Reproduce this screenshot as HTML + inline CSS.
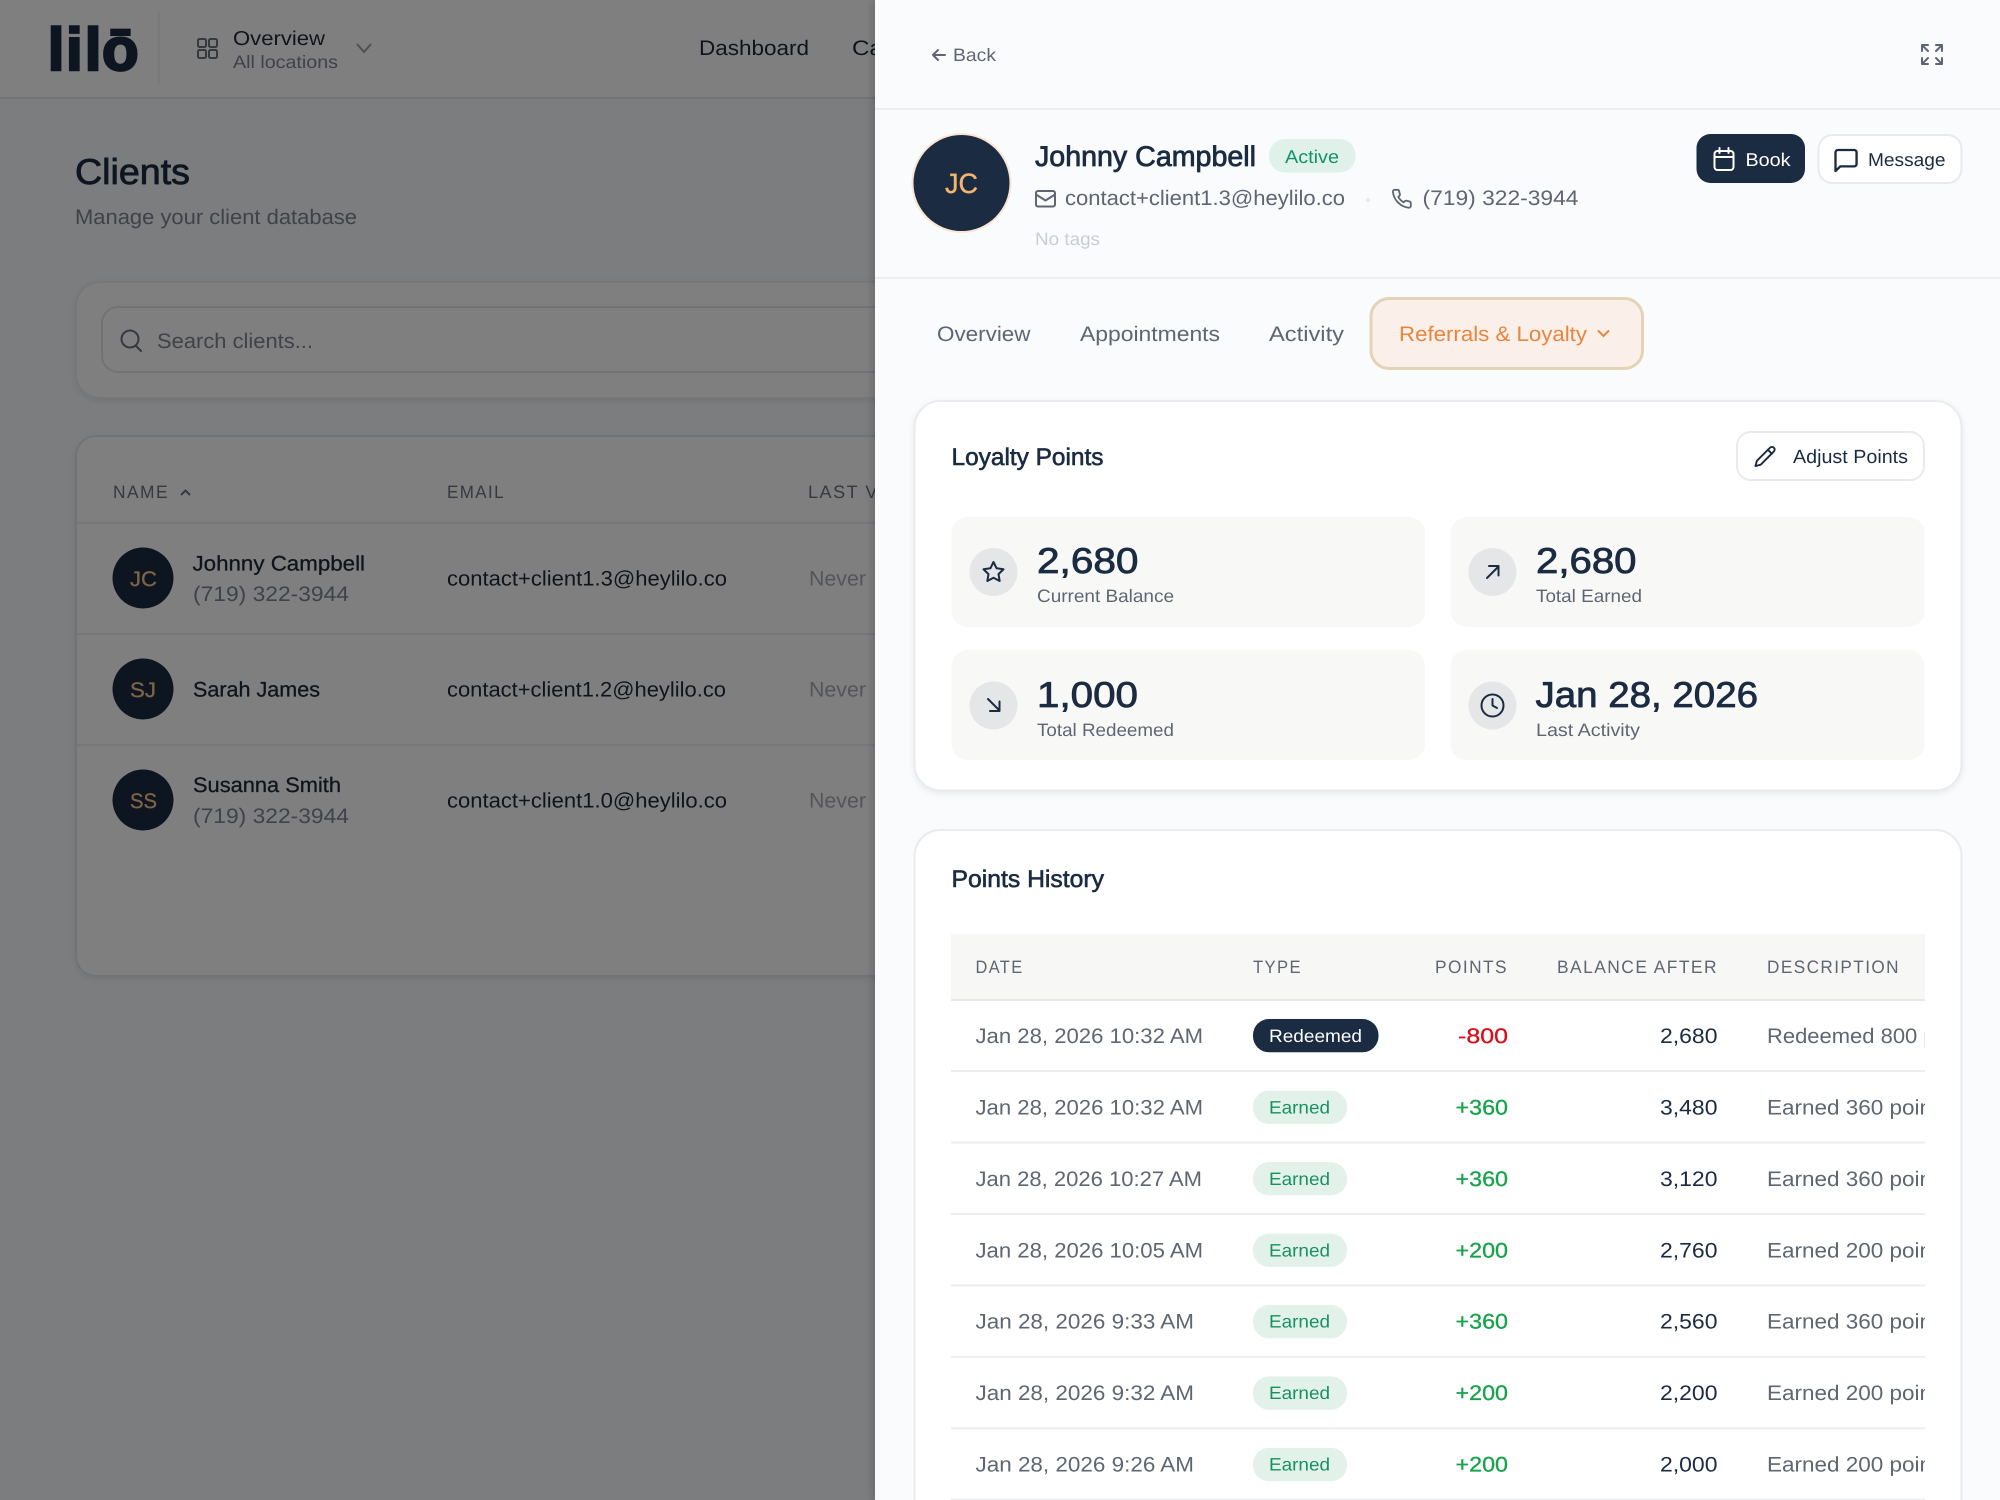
<!DOCTYPE html>
<html><head><meta charset="utf-8"><title>Clients</title>
<style>
html,body{margin:0;padding:0;width:2000px;height:1500px;overflow:hidden;background:#f9fbfd}
svg{display:block}
text{font-family:"Liberation Sans",sans-serif;text-rendering:geometricPrecision}
.n{fill:#1a2b42}.sb{fill:#1a2b42;stroke:#1a2b42;stroke-width:.8px}
.g{fill:#5f6673}.d{fill:#1f2937}.m{fill:#7f8590}
.h{letter-spacing:1.5px}
.i{fill:none;stroke:#1a2b42;stroke-width:2;stroke-linecap:round;stroke-linejoin:round}
.ig{fill:none;stroke:#5f6673;stroke-width:2;stroke-linecap:round;stroke-linejoin:round}
.w{fill:none;stroke:#fff;stroke-width:2;stroke-linecap:round;stroke-linejoin:round}
.l{fill:#eceef0}
.ew{fill:#16915f}.p{fill:#16a34a}
</style></head><body>
<svg width="2000" height="1500" viewBox="0 0 2000 1500" xmlns="http://www.w3.org/2000/svg">
<defs>
<clipPath id="tc"><rect x="951" y="930" width="974" height="570"/></clipPath>
<clipPath id="pg"><rect width="2000" height="1500"/></clipPath>
<filter id="sh" x="-5%" y="-5%" width="110%" height="110%"><feDropShadow dx="0" dy="2" stdDeviation="3" flood-color="#000" flood-opacity=".07"/></filter>
<filter id="psh" x="-5%" y="0%" width="110%" height="100%"><feDropShadow dx="-3" dy="0" stdDeviation="4" flood-color="#000" flood-opacity=".15"/></filter>
</defs>
<g clip-path="url(#pg)">

<!-- left page -->
<rect width="875" height="1500" fill="#f7fafc"/>
<rect width="875" height="98" fill="#fff"/>
<rect y="97" width="875" height="2" fill="#e5e7eb"/>
<text x="47.700 66 84.700 102" y="70" font-size="60" font-weight="700" fill="#1a2b42" stroke="#1a2b42" stroke-width="2.500">lilō</text>
<rect x="158" y="12" width="1.500" height="73" fill="#edeef0"/>
<g fill="none" stroke="#6b7280" stroke-width="2"><rect x="198" y="39" width="8" height="8" rx="1.500"/><rect x="209" y="39" width="8" height="8" rx="1.500"/><rect x="198" y="50" width="8" height="8" rx="1.500"/><rect x="209" y="50" width="8" height="8" rx="1.500"/></g>
<text x="233" y="45" font-size="20" textLength="92" lengthAdjust="spacingAndGlyphs" class="d">Overview</text>
<text x="233" y="68" font-size="18" textLength="105" lengthAdjust="spacingAndGlyphs" fill="#7f8590">All locations</text>
<path d="M357 44l7 8 7-8" fill="none" stroke="#9aa0a8" stroke-width="2"/>
<text x="699" y="55" font-size="21" textLength="110" lengthAdjust="spacingAndGlyphs" class="d">Dashboard</text>
<text x="852" y="55" font-size="21" textLength="98" lengthAdjust="spacingAndGlyphs" class="d">Calendar</text>

<text x="75" y="184" font-size="36" textLength="115" lengthAdjust="spacingAndGlyphs" fill="#1a2b42" stroke="#1a2b42" stroke-width=".8">Clients</text>
<text x="75" y="224" font-size="21" textLength="282" lengthAdjust="spacingAndGlyphs" fill="#7f8590">Manage your client database</text>

<rect x="76" y="282" width="1000" height="116" rx="24" fill="#fff" stroke="#eceef0" stroke-width="2" filter="url(#sh)"/>
<rect x="102" y="307" width="1000" height="65" rx="16" fill="#fff" stroke="#e5e7eb" stroke-width="2"/>
<circle cx="130" cy="339" r="8.500" fill="none" stroke="#6b7280" stroke-width="2"/><path d="M136 346l5 5" fill="none" stroke="#6b7280" stroke-width="2" stroke-linecap="round"/>
<text x="157" y="348" font-size="21" textLength="156" lengthAdjust="spacingAndGlyphs" fill="#7f8590">Search clients...</text>

<rect x="76" y="436" width="1000" height="540" rx="20" fill="#fff" stroke="#e5e7eb" stroke-width="2" filter="url(#sh)"/>
<text x="113" y="498" font-size="18" class="h" textLength="56" lengthAdjust="spacingAndGlyphs" fill="#6b7280">NAME</text>
<path d="M181 495l4.500-4.500 4.500 4.500" fill="none" stroke="#6b7280" stroke-width="2"/>
<text x="447" y="498" font-size="18" class="h" textLength="58" lengthAdjust="spacingAndGlyphs" fill="#6b7280">EMAIL</text>
<text x="808" y="498" font-size="18" class="h" textLength="110" lengthAdjust="spacingAndGlyphs" fill="#6b7280">LAST VISIT</text>
<rect x="77" y="522" width="800" height="2" fill="#eceef0"/>
<rect x="77" y="633" width="800" height="2" fill="#eceef0"/>
<rect x="77" y="744" width="800" height="2" fill="#eceef0"/>

<circle cx="143" cy="578" r="30.500" fill="#1a2b42"/>
<text x="130" y="586" font-size="21" textLength="27" lengthAdjust="spacingAndGlyphs" fill="#f8c98c" stroke="#f8c98c" stroke-width=".3">JC</text>
<text x="192.500" y="570.500" font-size="21" textLength="172.500" lengthAdjust="spacingAndGlyphs" class="d" stroke="#1f2937" stroke-width=".3">Johnny Campbell</text>
<text x="193" y="601" font-size="21" textLength="156" lengthAdjust="spacingAndGlyphs" class="m">(719) 322-3944</text>
<text x="447" y="585.500" font-size="21" textLength="280" lengthAdjust="spacingAndGlyphs" class="d">contact+client1.3@heylilo.co</text>
<text x="809" y="585.500" font-size="21" textLength="57" lengthAdjust="spacingAndGlyphs" fill="#a8aab0">Never</text>

<circle cx="143" cy="689" r="30.500" fill="#1a2b42"/>
<text x="130" y="697" font-size="21" textLength="26" lengthAdjust="spacingAndGlyphs" fill="#f8c98c" stroke="#f8c98c" stroke-width=".3">SJ</text>
<text x="193" y="696.500" font-size="21" textLength="127" lengthAdjust="spacingAndGlyphs" class="d" stroke="#1f2937" stroke-width=".3">Sarah James</text>
<text x="447" y="696.500" font-size="21" textLength="279" lengthAdjust="spacingAndGlyphs" class="d">contact+client1.2@heylilo.co</text>
<text x="809" y="696.500" font-size="21" textLength="57" lengthAdjust="spacingAndGlyphs" fill="#a8aab0">Never</text>

<circle cx="143" cy="800" r="30.500" fill="#1a2b42"/>
<text x="130" y="808" font-size="21" textLength="27" lengthAdjust="spacingAndGlyphs" fill="#f8c98c" stroke="#f8c98c" stroke-width=".3">SS</text>
<text x="193" y="792" font-size="21" textLength="148" lengthAdjust="spacingAndGlyphs" class="d" stroke="#1f2937" stroke-width=".3">Susanna Smith</text>
<text x="193" y="823" font-size="21" textLength="156" lengthAdjust="spacingAndGlyphs" class="m">(719) 322-3944</text>
<text x="447" y="807.500" font-size="21" textLength="280" lengthAdjust="spacingAndGlyphs" class="d">contact+client1.0@heylilo.co</text>
<text x="809" y="807.500" font-size="21" textLength="57" lengthAdjust="spacingAndGlyphs" fill="#a8aab0">Never</text>

<rect width="875" height="1500" fill="#000" fill-opacity=".5"/>

<!-- panel -->
<rect x="875" width="1125" height="1500" fill="#f9fbfd" filter="url(#psh)"/>
<rect x="875" y="108" width="1125" height="2" fill="#eceef0"/>
<rect x="875" y="277" width="1125" height="2" fill="#eceef0"/>
<path class="ig" d="M945 55h-12m5-5l-5 5 5 5" stroke-width="1.800"/>
<text x="953" y="61" font-size="18" textLength="43" lengthAdjust="spacingAndGlyphs" class="g">Back</text>
<path class="ig" d="M1922 51v-6h6M1922 45l6 6M1942 51v-6h-6M1942 45l-6 6M1922 58v6h6M1922 64l6-6M1942 58v6h-6M1942 64l-6-6"/>

<circle cx="961.500" cy="183" r="50" fill="#fbe4d2"/>
<circle cx="961.500" cy="183" r="48" fill="#1a2b42"/>
<text x="945" y="193" font-size="28" textLength="33" lengthAdjust="spacingAndGlyphs" fill="#f4b56c" stroke="#f4b56c" stroke-width=".4">JC</text>
<text x="1035" y="166" font-size="28.500" textLength="221" lengthAdjust="spacingAndGlyphs" class="sb">Johnny Campbell</text>
<rect x="1269" y="139" width="86.500" height="33.500" rx="16" fill="#e0f1ea"/>
<text x="1285" y="163" font-size="18.500" textLength="54" lengthAdjust="spacingAndGlyphs" fill="#11936a">Active</text>
<rect class="ig" x="1036" y="191" width="19" height="15.500" rx="2"/><path class="ig" d="M1036 194.500l9.500 6 9.500-6"/>
<text x="1065" y="205" font-size="21" textLength="280" lengthAdjust="spacingAndGlyphs" class="g">contact+client1.3@heylilo.co</text>
<circle cx="1368" cy="200" r="1.800" fill="#e5e7eb"/>
<path class="ig" transform="translate(1391,188) scale(.9)" d="M22 16.920v3a2 2 0 0 1-2.180 2 19.790 19.790 0 0 1-8.630-3.070 19.500 19.500 0 0 1-6-6 19.790 19.790 0 0 1-3.070-8.670A2 2 0 0 1 4.110 2h3a2 2 0 0 1 2 1.720c.127.96.361 1.903.7 2.810a2 2 0 0 1-.45 2.110L8.090 9.910a16 16 0 0 0 6 6l1.270-1.270a2 2 0 0 1 2.110-.45c.907.339 1.850.573 2.810.7A2 2 0 0 1 22 16.920z"/>
<text x="1422.500" y="205" font-size="21" textLength="156" lengthAdjust="spacingAndGlyphs" class="g">(719) 322-3944</text>
<text x="1035" y="245" font-size="18" textLength="65" lengthAdjust="spacingAndGlyphs" fill="#c9cdd3">No tags</text>

<rect x="1696.500" y="134" width="108.500" height="49" rx="14" fill="#1a2b42"/>
<rect class="w" x="1714.500" y="151" width="19" height="19" rx="3"/><path class="w" d="M1719.500 148v5M1728.500 148v5M1714.500 157h19"/>
<text x="1745.500" y="166" font-size="18.500" textLength="45" lengthAdjust="spacingAndGlyphs" fill="#fff">Book</text>
<rect x="1818.500" y="135" width="143" height="48" rx="14" fill="#fff" stroke="#e8eaed" stroke-width="2"/>
<path class="i" transform="translate(1832,146.500) scale(1.170)" stroke-width="1.700" d="M21 15a2 2 0 0 1-2 2H7l-4 4V5a2 2 0 0 1 2-2h14a2 2 0 0 1 2 2z"/>
<text x="1868" y="166" font-size="18.500" textLength="77.500" lengthAdjust="spacingAndGlyphs" class="n">Message</text>

<text x="937" y="341" font-size="21" textLength="93.500" lengthAdjust="spacingAndGlyphs" class="g">Overview</text>
<text x="1080" y="341" font-size="21" textLength="140" lengthAdjust="spacingAndGlyphs" class="g">Appointments</text>
<text x="1269" y="341" font-size="21" textLength="75" lengthAdjust="spacingAndGlyphs" class="g">Activity</text>
<rect x="1371" y="298.500" width="271.500" height="70" rx="18" fill="#fbefe9" stroke="#e3d4b8" stroke-width="3"/>
<text x="1399" y="341" font-size="21" textLength="188" lengthAdjust="spacingAndGlyphs" fill="#e8853f">Referrals &amp; Loyalty</text>
<path d="M1598.500 331l5 5 5-5" fill="none" stroke="#e8853f" stroke-width="2" stroke-linecap="round"/>

<!-- loyalty card -->
<rect x="914.500" y="401" width="1047" height="389.500" rx="26" fill="#fff" stroke="#e9ebee" stroke-width="2" filter="url(#sh)"/>
<text x="951.500" y="465" font-size="24" textLength="152" lengthAdjust="spacingAndGlyphs" class="sb" style="stroke-width:.6px">Loyalty Points</text>
<rect x="1737" y="432" width="187" height="48" rx="14" fill="#fff" stroke="#e8eaed" stroke-width="2"/>
<g class="i" transform="translate(1753.500,445) scale(.96)"><path d="M17 3a2.850 2.830 0 1 1 4 4L7.500 20.500 2 22l1.500-5.500Z"/><path d="M15 5l4 4"/></g>
<text x="1793" y="463" font-size="19" textLength="115" lengthAdjust="spacingAndGlyphs" class="n">Adjust Points</text>

<g fill="#f8f8f7"><rect x="951.500" y="517" width="473.500" height="110" rx="16"/><rect x="1450.500" y="517" width="474" height="110" rx="16"/><rect x="951.500" y="650" width="473.500" height="110" rx="16"/><rect x="1450.500" y="650" width="474" height="110" rx="16"/></g>
<g fill="#e5e6e8"><circle cx="993.500" cy="572" r="24"/><circle cx="1492.500" cy="572" r="24"/><circle cx="993.500" cy="705.500" r="24"/><circle cx="1492.500" cy="705.500" r="24"/></g>
<path class="i" transform="translate(982,560.500)" d="M11.500 1.500l3.090 6.260L21.500 8.770l-5 4.870 1.180 6.880-6.180-3.250-6.180 3.250 1.180-6.880-5-4.870 6.910-1.010Z"/>
<path class="i" d="M1487 578L1498 567M1489 566h9.500v9.500"/>
<path class="i" d="M988 699L999 710M999.500 701.500v9.500h-9.500"/>
<circle class="i" cx="1492.500" cy="705.500" r="11"/><path class="i" d="M1492.500 699v6.500l4.500 2.500"/>

<text x="1037" y="573" font-size="36" textLength="101.500" lengthAdjust="spacingAndGlyphs" class="sb">2,680</text>
<text x="1536" y="573" font-size="36" textLength="100.500" lengthAdjust="spacingAndGlyphs" class="sb">2,680</text>
<text x="1037" y="707" font-size="36" textLength="101" lengthAdjust="spacingAndGlyphs" class="sb">1,000</text>
<text x="1535.500" y="707" font-size="36" textLength="222.500" lengthAdjust="spacingAndGlyphs" class="sb">Jan 28, 2026</text>
<text x="1037" y="602" font-size="18" textLength="137" lengthAdjust="spacingAndGlyphs" class="g">Current Balance</text>
<text x="1536" y="602" font-size="18" textLength="106" lengthAdjust="spacingAndGlyphs" class="g">Total Earned</text>
<text x="1037" y="736" font-size="18" textLength="137" lengthAdjust="spacingAndGlyphs" class="g">Total Redeemed</text>
<text x="1536" y="736" font-size="18" textLength="104" lengthAdjust="spacingAndGlyphs" class="g">Last Activity</text>

<!-- history card -->
<path d="M914.500 1500V856a26 26 0 0 1 26-26h995a26 26 0 0 1 26 26v644" fill="#fff" stroke="#e9ebee" stroke-width="2"/>
<text x="951.500" y="887" font-size="24" textLength="152.500" lengthAdjust="spacingAndGlyphs" class="sb" style="stroke-width:.6px">Points History</text>
<g clip-path="url(#tc)">
<rect x="951" y="934" width="974" height="65.500" fill="#f7f7f5"/>
<rect x="951" y="999" width="974" height="2" fill="#e9e9e9"/>
<g class="g" font-size="18">
<text class="h" x="975.500" y="973" textLength="48" lengthAdjust="spacingAndGlyphs">DATE</text>
<text class="h" x="1253" y="973" textLength="49" lengthAdjust="spacingAndGlyphs">TYPE</text>
<text class="h" x="1435" y="973" textLength="73" lengthAdjust="spacingAndGlyphs">POINTS</text>
<text class="h" x="1557" y="973" textLength="161" lengthAdjust="spacingAndGlyphs">BALANCE AFTER</text>
<text class="h" x="1767" y="973" textLength="133" lengthAdjust="spacingAndGlyphs">DESCRIPTION</text>
</g>
<g class="l"><rect x="951" y="1070" width="974" height="2"/><rect x="951" y="1141.500" width="974" height="2"/><rect x="951" y="1213" width="974" height="2"/><rect x="951" y="1284.400" width="974" height="2"/><rect x="951" y="1355.900" width="974" height="2"/><rect x="951" y="1427.300" width="974" height="2"/><rect x="951" y="1498.700" width="974" height="2"/></g>

<g font-size="21" class="g">
<text x="975.500" y="1043" textLength="227.500" lengthAdjust="spacingAndGlyphs">Jan 28, 2026 10:32 AM</text>
<text x="975.500" y="1114.400" textLength="227.500" lengthAdjust="spacingAndGlyphs">Jan 28, 2026 10:32 AM</text>
<text x="975.500" y="1185.900" textLength="226.500" lengthAdjust="spacingAndGlyphs">Jan 28, 2026 10:27 AM</text>
<text x="975.500" y="1257.300" textLength="227.500" lengthAdjust="spacingAndGlyphs">Jan 28, 2026 10:05 AM</text>
<text x="975.500" y="1328.700" textLength="218.500" lengthAdjust="spacingAndGlyphs">Jan 28, 2026 9:33 AM</text>
<text x="975.500" y="1400.100" textLength="218.500" lengthAdjust="spacingAndGlyphs">Jan 28, 2026 9:32 AM</text>
<text x="975.500" y="1471.600" textLength="218.500" lengthAdjust="spacingAndGlyphs">Jan 28, 2026 9:26 AM</text>
<text x="1767" y="1043" textLength="215" lengthAdjust="spacingAndGlyphs">Redeemed 800 points</text>
<text x="1767" y="1114.400" textLength="165" lengthAdjust="spacingAndGlyphs">Earned 360 poin</text>
<text x="1767" y="1185.900" textLength="165" lengthAdjust="spacingAndGlyphs">Earned 360 poin</text>
<text x="1767" y="1257.300" textLength="165" lengthAdjust="spacingAndGlyphs">Earned 200 poin</text>
<text x="1767" y="1328.700" textLength="165" lengthAdjust="spacingAndGlyphs">Earned 360 poin</text>
<text x="1767" y="1400.100" textLength="165" lengthAdjust="spacingAndGlyphs">Earned 200 poin</text>
<text x="1767" y="1471.600" textLength="165" lengthAdjust="spacingAndGlyphs">Earned 200 poin</text>
</g>

<rect x="1253" y="1019" width="125.500" height="33.300" rx="16" fill="#1a2b42"/>
<text x="1269" y="1042" font-size="18" textLength="93" lengthAdjust="spacingAndGlyphs" fill="#fff">Redeemed</text>
<g fill="#e2f1ea"><rect x="1253" y="1090.700" width="94" height="33.300" rx="16"/><rect x="1253" y="1162.100" width="94" height="33.300" rx="16"/><rect x="1253" y="1233.600" width="94" height="33.300" rx="16"/><rect x="1253" y="1305" width="94" height="33.300" rx="16"/><rect x="1253" y="1376.400" width="94" height="33.300" rx="16"/><rect x="1253" y="1447.900" width="94" height="33.300" rx="16"/></g>
<g font-size="18" class="ew">
<text x="1269" y="1113.400" textLength="61" lengthAdjust="spacingAndGlyphs">Earned</text>
<text x="1269" y="1184.900" textLength="61" lengthAdjust="spacingAndGlyphs">Earned</text>
<text x="1269" y="1256.300" textLength="61" lengthAdjust="spacingAndGlyphs">Earned</text>
<text x="1269" y="1327.700" textLength="61" lengthAdjust="spacingAndGlyphs">Earned</text>
<text x="1269" y="1399.100" textLength="61" lengthAdjust="spacingAndGlyphs">Earned</text>
<text x="1269" y="1470.600" textLength="61" lengthAdjust="spacingAndGlyphs">Earned</text>
</g>

<text x="1458" y="1043" font-size="21" textLength="50" lengthAdjust="spacingAndGlyphs" fill="#d80f1a" stroke="#d80f1a" stroke-width=".3">-800</text>
<g font-size="21" class="p" stroke="#16a34a" stroke-width=".3">
<text x="1455.500" y="1114.400" textLength="52.500" lengthAdjust="spacingAndGlyphs">+360</text>
<text x="1455.500" y="1185.900" textLength="52.500" lengthAdjust="spacingAndGlyphs">+360</text>
<text x="1455.500" y="1257.300" textLength="52.500" lengthAdjust="spacingAndGlyphs">+200</text>
<text x="1455.500" y="1328.700" textLength="52.500" lengthAdjust="spacingAndGlyphs">+360</text>
<text x="1455.500" y="1400.100" textLength="52.500" lengthAdjust="spacingAndGlyphs">+200</text>
<text x="1455.500" y="1471.600" textLength="52.500" lengthAdjust="spacingAndGlyphs">+200</text>
</g>
<g font-size="21" class="n">
<text x="1660" y="1043" textLength="57.500" lengthAdjust="spacingAndGlyphs">2,680</text>
<text x="1660" y="1114.400" textLength="57.500" lengthAdjust="spacingAndGlyphs">3,480</text>
<text x="1660" y="1185.900" textLength="57.500" lengthAdjust="spacingAndGlyphs">3,120</text>
<text x="1660" y="1257.300" textLength="57.500" lengthAdjust="spacingAndGlyphs">2,760</text>
<text x="1660" y="1328.700" textLength="57.500" lengthAdjust="spacingAndGlyphs">2,560</text>
<text x="1660" y="1400.100" textLength="57.500" lengthAdjust="spacingAndGlyphs">2,200</text>
<text x="1660" y="1471.600" textLength="57.500" lengthAdjust="spacingAndGlyphs">2,000</text>
</g>
</g>
</g>
</svg>
</body></html>
